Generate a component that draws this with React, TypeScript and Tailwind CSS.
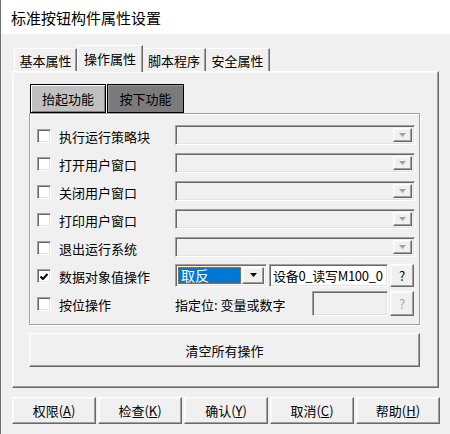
import React from 'react'

const sunken =
  'border border-t-[#a0a0a0] border-l-[#a0a0a0] border-r-white border-b-white shadow-[inset_1px_1px_0_#696969,inset_-1px_-1px_0_#e3e3e3]'
const raised =
  'border border-t-white border-l-white border-r-[#696969] border-b-[#696969] shadow-[inset_-1px_-1px_0_#a0a0a0,inset_1px_1px_0_#f8f8f8]'

function Arrow({ dim }: { dim?: boolean }) {
  return (
    <svg width="7" height="4" viewBox="0 0 7 4">
      <path d="M0 0h7L3.5 4z" fill={dim ? '#a0a0a0' : '#000'} />
    </svg>
  )
}

function CheckBox({ checked }: { checked?: boolean }) {
  return (
    <div className={`w-[14px] h-[14px] bg-white flex items-center justify-center ${sunken}`}>
      {checked && (
        <svg width="8" height="7" viewBox="0 0 8 7">
          <path d="M0.5 3.5l2.5 2.5 4.5-5" stroke="#000" strokeWidth="2" fill="none" />
        </svg>
      )}
    </div>
  )
}

function EmptyCombo() {
  return (
    <div className={`w-[240px] h-[20px] bg-[#f0f0f0] flex justify-end items-stretch p-[2px] ${sunken}`}>
      <div className={`w-[19px] bg-[#f0f0f0] flex items-center justify-center ${raised}`}>
        <Arrow dim />
      </div>
    </div>
  )
}

function Row({ label, checked, children }: { label: string; checked?: boolean; children: React.ReactNode }) {
  return (
    <div className="h-[28px] flex items-center pl-[7px]">
      <div className="mt-[2px]">
        <CheckBox checked={checked} />
      </div>
      <div className="ml-[8px] w-[116px] mt-[2px]">{label}</div>
      {children}
    </div>
  )
}

function Btn({ name, k }: { name: string; k: string }) {
  return (
    <div className={`w-[84px] h-[27px] flex items-center justify-center bg-[#f0f0f0] ${raised}`}>
      {name}(<span className="underline">{k}</span>)
    </div>
  )
}

export default function App() {
  return (
    <div className="w-[450px] h-[434px] bg-[#f0f0f0] border-l border-[#6e6e6e] font-['Noto_Sans_CJK_SC',sans-serif] text-[13px] leading-none text-black overflow-hidden">
      <div className="h-[34px] bg-white flex items-center pl-[10px] text-[15px]">标准按钮构件属性设置</div>

      <div className="pl-[11px] pt-[11px]">
        {/* tabs */}
        <div className="flex items-end h-[26px] pl-[2px]">
          <div className="w-[63px] h-[23px] flex items-center justify-center border-t border-l border-t-white border-l-white border-r border-r-[#696969] shadow-[inset_-1px_0_0_#a0a0a0]">基本属性</div>
          <div className="relative z-10 w-[66px] h-[27px] -mb-[1px] bg-[#f0f0f0] flex items-center justify-center pb-[2px] border-t border-l border-t-white border-l-white border-r border-r-[#696969] shadow-[inset_-1px_0_0_#a0a0a0]">操作属性</div>
          <div className="w-[63px] h-[23px] flex items-center justify-center border-t border-t-white border-r border-r-[#696969] shadow-[inset_-1px_0_0_#a0a0a0]">脚本程序</div>
          <div className="w-[64px] h-[23px] flex items-center justify-center border-t border-t-white border-r border-r-[#696969] shadow-[inset_-1px_0_0_#a0a0a0]">安全属性</div>
        </div>

        {/* panel */}
        <div className={`w-[427px] h-[317px] pl-[16px] pt-[12px] ${raised}`}>
          <div className="flex pl-[1px]">
            <div className="w-[76px] h-[29px] bg-[#c0c0c0] border border-black shadow-[inset_1px_1px_0_#fff,inset_-1px_-1px_0_#808080] flex items-center justify-center">抬起功能</div>
            <div className="ml-[1px] w-[77px] h-[29px] bg-[#7b7b7b] border border-black shadow-[inset_1px_1px_0_#9a9a9a] flex items-center justify-center">按下功能</div>
          </div>

          <div className="w-[391px] h-[212px] border border-[#a0a0a0] shadow-[1px_1px_0_#fff,inset_1px_1px_0_#fff] pt-[7px]">
            <Row label="执行运行策略块"><EmptyCombo /></Row>
            <Row label="打开用户窗口"><EmptyCombo /></Row>
            <Row label="关闭用户窗口"><EmptyCombo /></Row>
            <Row label="打印用户窗口"><EmptyCombo /></Row>
            <Row label="退出运行系统"><EmptyCombo /></Row>
            <Row label="数据对象值操作" checked>
              <div className={`w-[92px] h-[23px] bg-white flex p-[2px] ${sunken}`}>
                <div className="flex-1 bg-[#0078d7] outline-1 outline-dotted outline-[#e07000] -outline-offset-1 text-white flex items-center pl-[3px] text-[14px]">取反</div>
                <div className={`ml-[1px] w-[22px] bg-[#f0f0f0] flex items-center justify-center ${raised}`}>
                  <Arrow />
                </div>
              </div>
              <div className={`ml-[2px] w-[119px] h-[23px] bg-white flex items-center pl-[3px] tracking-[-0.3px] ${sunken}`}>设备0_读写M100_0</div>
              <div className={`ml-[2px] w-[24px] h-[23px] flex items-center justify-center ${raised}`}>?</div>
            </Row>
            <Row label="按位操作">
              <div className="w-[137px] mt-[2px]">指定位: 变量或数字</div>
              <div className={`w-[76px] h-[25px] bg-[#f0f0f0] ${sunken}`}></div>
              <div className={`ml-[2px] w-[24px] h-[25px] flex items-center justify-center text-[#a0a0a0] ${raised}`}>?</div>
            </Row>
          </div>

          <div className={`mt-[8px] w-[391px] h-[34px] flex items-center justify-center ${raised}`}>清空所有操作</div>
        </div>

        {/* bottom buttons */}
        <div className="mt-[9px] flex gap-[2px]">
          <Btn name="权限" k="A" />
          <Btn name="检查" k="K" />
          <Btn name="确认" k="Y" />
          <Btn name="取消" k="C" />
          <Btn name="帮助" k="H" />
        </div>
      </div>
    </div>
  )
}
